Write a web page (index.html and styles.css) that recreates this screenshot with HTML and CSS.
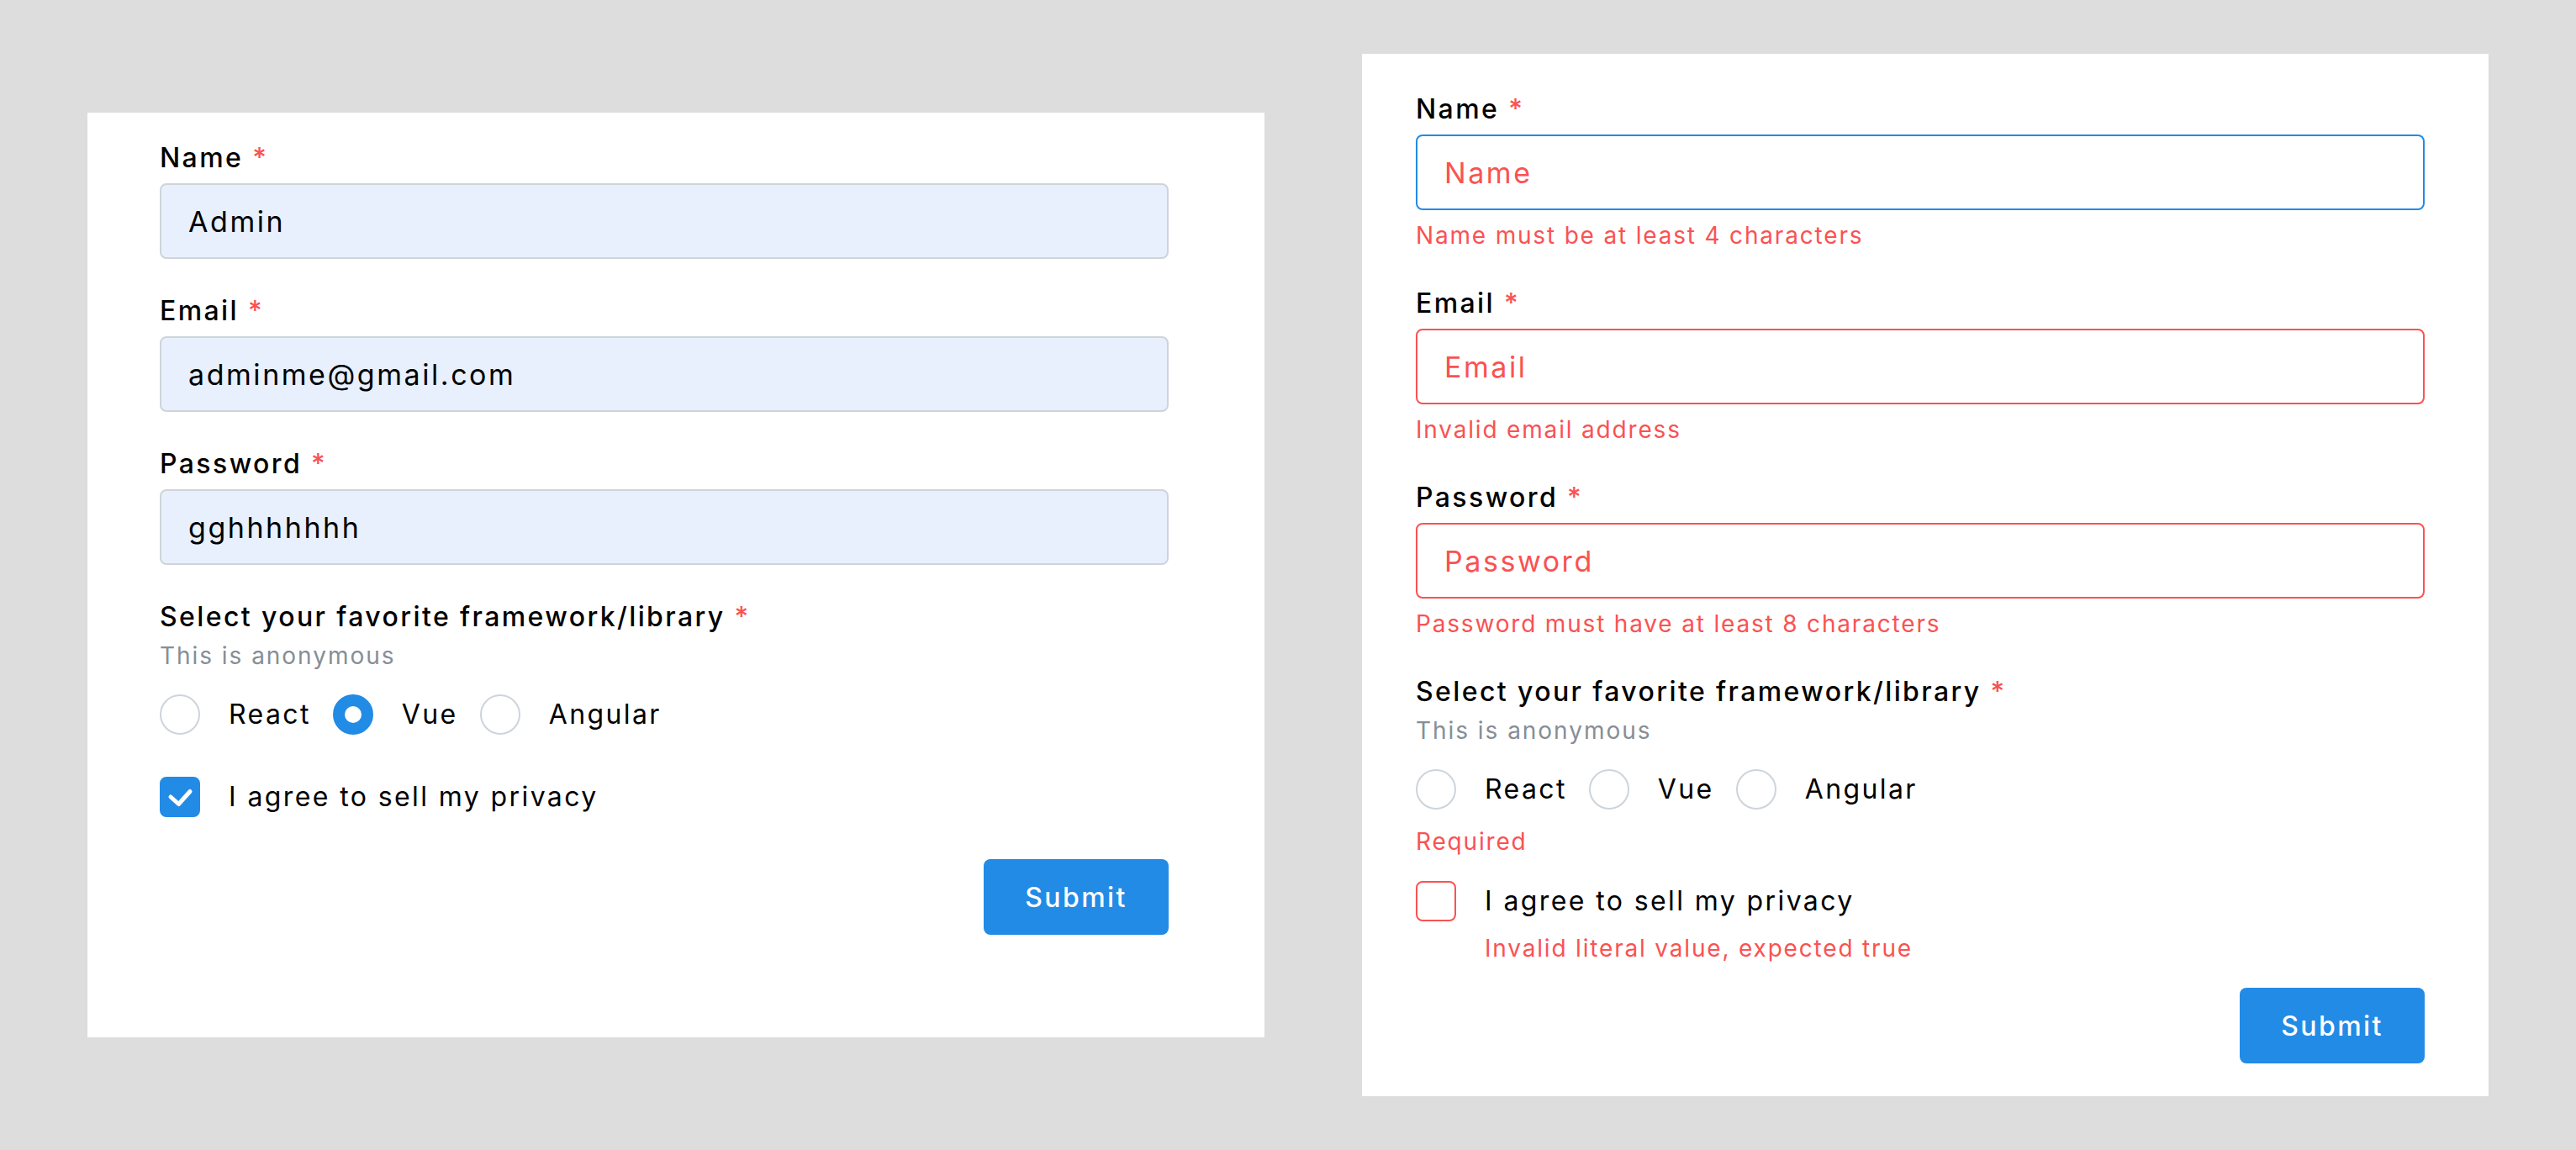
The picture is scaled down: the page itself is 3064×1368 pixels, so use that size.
FILE: index.html
```html
<!DOCTYPE html>
<html lang="en">
<head>
<meta charset="utf-8">
<title>Forms</title>
<link rel="stylesheet" href="styles.css">
</head>
<body>
<main class="page">
  <form class="card card-filled">
    <div class="field">
      <label class="label">Name <span class="req">*</span></label>
      <div class="input input-autofill">Admin</div>
    </div>
    <div class="field">
      <label class="label">Email <span class="req">*</span></label>
      <div class="input input-autofill">adminme@gmail.com</div>
    </div>
    <div class="field">
      <label class="label">Password <span class="req">*</span></label>
      <div class="input input-autofill">gghhhhhhh</div>
    </div>
    <div class="field">
      <div class="label">Select your favorite framework/library <span class="req">*</span></div>
      <div class="desc">This is anonymous</div>
      <div class="radios">
        <div class="radio"><span class="dot"></span><span>React</span></div>
        <div class="radio"><span class="dot dot-on"></span><span>Vue</span></div>
        <div class="radio"><span class="dot"></span><span>Angular</span></div>
      </div>
    </div>
    <div class="check">
      <span class="box box-on"><svg viewBox="0 0 48 48" width="48" height="48"><polyline points="13,24 22.5,32.5 36,17.5" fill="none" stroke="#fff" stroke-width="5" stroke-linecap="round" stroke-linejoin="round"/></svg></span>
      <div class="check-text"><span class="check-label">I agree to sell my privacy</span></div>
    </div>
    <div class="actions"><button type="button" class="btn">Submit</button></div>
  </form>

  <form class="card card-errors">
    <div class="field field-error">
      <label class="label">Name <span class="req">*</span></label>
      <div class="input input-error input-focus">Name</div>
      <div class="error">Name must be at least 4 characters</div>
    </div>
    <div class="field field-error">
      <label class="label">Email <span class="req">*</span></label>
      <div class="input input-error">Email</div>
      <div class="error">Invalid email address</div>
    </div>
    <div class="field field-error">
      <label class="label">Password <span class="req">*</span></label>
      <div class="input input-error">Password</div>
      <div class="error">Password must have at least 8 characters</div>
    </div>
    <div class="field">
      <div class="label">Select your favorite framework/library <span class="req">*</span></div>
      <div class="desc">This is anonymous</div>
      <div class="radios">
        <div class="radio"><span class="dot"></span><span>React</span></div>
        <div class="radio"><span class="dot"></span><span>Vue</span></div>
        <div class="radio"><span class="dot"></span><span>Angular</span></div>
      </div>
      <div class="error error-group">Required</div>
    </div>
    <div class="check check-after-error">
      <span class="box box-error"></span>
      <div class="check-text">
        <span class="check-label">I agree to sell my privacy</span>
        <span class="error error-check">Invalid literal value, expected true</span>
      </div>
    </div>
    <div class="actions actions-after-error"><button type="button" class="btn">Submit</button></div>
  </form>
</main>
</body>
</html>
```

FILE: styles.css
```css
* {
  box-sizing: border-box;
}

body {
  margin: 0;
  background: #dddddd;
  font-family: Inter, "Noto Sans", "Liberation Sans", sans-serif;
  color: #000;
}

.page {
  height: 1368px;
  display: flex;
  align-items: center;
  padding: 0 104px;
  gap: 116px;
}

.card {
  flex: none;
  display: flex;
  flex-direction: column;
  background: #fff;
}

.card-filled {
  width: 1400px;
  height: 1100px;
  padding: 30px 114px 0 86px;
}

.card-errors {
  width: 1340px;
  height: 1240px;
  padding: 42px 76px 0 64px;
}

.field {
  display: flex;
  flex-direction: column;
}

.field + .field {
  margin-top: 38px;
}

.field-error + .field {
  margin-top: 37px;
}

.label {
  display: block;
  font-size: 32px;
  line-height: 48px;
  font-weight: 500;
  letter-spacing: 0.075em;
  color: #000;
}

.req {
  color: #fa5252;
}

.input {
  margin-top: 6px;
  height: 90px;
  display: flex;
  align-items: center;
  padding: 0 32px;
  border: 2px solid #ced4da;
  border-radius: 8px;
  font-size: 34px;
  letter-spacing: 0.075em;
  color: #000;
}

.input-autofill {
  background: #e8f0fe;
}

.input-error {
  border-color: #fa5252;
  color: #fa5252;
}

.input-focus {
  border-color: #228be6;
}

.error {
  display: block;
  margin-top: 10px;
  font-size: 28px;
  line-height: 40px;
  letter-spacing: 0.065em;
  color: #fa5252;
}

.error-group {
  margin-top: 18px;
}

.error-check {
  margin-top: 12px;
}

.desc {
  margin-top: 2px;
  font-size: 28px;
  line-height: 40px;
  letter-spacing: 0.07em;
  color: #868e96;
}

.radios {
  display: flex;
  gap: 26px;
  margin-top: 26px;
}

.radio {
  display: flex;
  align-items: center;
  gap: 34px;
  font-size: 32px;
  line-height: 48px;
  letter-spacing: 0.075em;
}

.dot {
  flex: none;
  width: 48px;
  height: 48px;
  border: 2px solid #ced4da;
  border-radius: 50%;
}

.dot-on {
  display: flex;
  align-items: center;
  justify-content: center;
  background: #228be6;
  border-color: #228be6;
}

.dot-on::after {
  content: "";
  width: 20px;
  height: 20px;
  border-radius: 50%;
  background: #fff;
}

.check {
  display: flex;
  align-items: flex-start;
  gap: 34px;
  margin-top: 50px;
}

.check-after-error {
  margin-top: 27px;
}

.box {
  flex: none;
  width: 48px;
  height: 48px;
  border: 2px solid #ced4da;
  border-radius: 8px;
  overflow: hidden;
}

.box svg {
  display: block;
  margin: -2px;
}

.box-on {
  background: #228be6;
  border-color: #228be6;
}

.box-error {
  border-color: #fa5252;
}

.check-text {
  display: flex;
  flex-direction: column;
}

.check-label {
  font-size: 32px;
  line-height: 48px;
  letter-spacing: 0.075em;
}

.actions {
  display: flex;
  justify-content: flex-end;
  margin-top: 50px;
}

.actions-after-error {
  margin-top: 27px;
}

.btn {
  width: 220px;
  height: 90px;
  border: 0;
  border-radius: 8px;
  background: #228be6;
  color: #fff;
  font-family: inherit;
  font-size: 32px;
  font-weight: 500;
  letter-spacing: 0.075em;
  cursor: pointer;
}
```
